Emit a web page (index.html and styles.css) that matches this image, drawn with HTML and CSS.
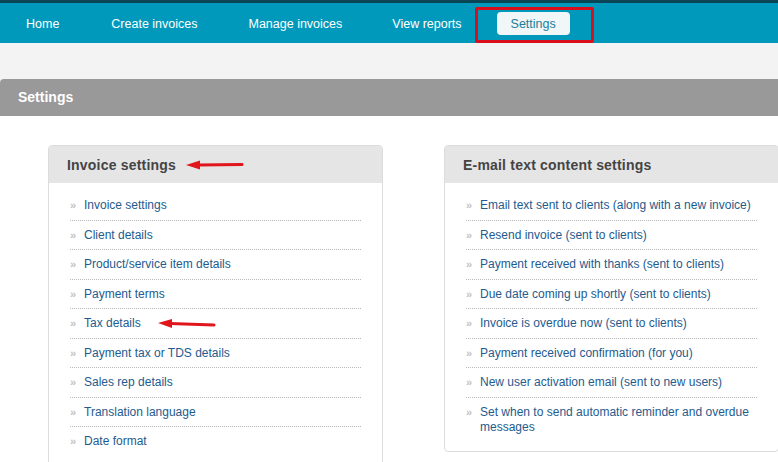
FILE: index.html
```html
<!DOCTYPE html>
<html lang="en">
  <head>
    <meta charset="UTF-8" />
    <title>Settings</title>
    <link rel="stylesheet" href="styles.css">
  </head>
  <body>
    <!-- Top navigation -->
    <div class="topbar">
      <a href="#" class="nav-item">Home</a>
      <a href="#" class="nav-item">Create invoices</a>
      <a href="#" class="nav-item">Manage invoices</a>
      <a href="#" class="nav-item">View reports</a>
      <div class="mark-box">
        <a href="#" class="nav-pill">Settings</a>
      </div>
    </div>

    <div class="page">
      <div class="titlebar">Settings</div>

      <div class="content">
        <div class="card">
          <div class="card-head">
            <h2>Invoice settings</h2>
            <svg class="arrow" width="58" height="10" viewBox="0 0 58 10">
              <polygon points="0,5 14,0.5 14,9.5" fill="#e0161c" />
              <line x1="12" y1="5" x2="56" y2="4.5" stroke="#e0161c" stroke-width="3" stroke-linecap="round" />
            </svg>
          </div>
          <ul class="links">
            <li><a href="#">Invoice settings</a></li>
            <li><a href="#">Client details</a></li>
            <li><a href="#">Product/service item details</a></li>
            <li><a href="#">Payment terms</a></li>
            <li>
              <a href="#">Tax details</a>
              <svg class="arrow arrow-small" width="58" height="10" viewBox="0 0 58 10">
                <polygon points="0,4 14,0 14,9" fill="#e0161c" />
                <line x1="12" y1="4.5" x2="56" y2="6" stroke="#e0161c" stroke-width="3" stroke-linecap="round" />
              </svg>
            </li>
            <li><a href="#">Payment tax or TDS details</a></li>
            <li><a href="#">Sales rep details</a></li>
            <li><a href="#">Translation language</a></li>
            <li><a href="#">Date format</a></li>
          </ul>
        </div>

        <div class="card">
          <div class="card-head">
            <h2>E-mail text content settings</h2>
          </div>
          <ul class="links">
            <li><a href="#">Email text sent to clients (along with a new invoice)</a></li>
            <li><a href="#">Resend invoice (sent to clients)</a></li>
            <li><a href="#">Payment received with thanks (sent to clients)</a></li>
            <li><a href="#">Due date coming up shortly (sent to clients)</a></li>
            <li><a href="#">Invoice is overdue now (sent to clients)</a></li>
            <li><a href="#">Payment received confirmation (for you)</a></li>
            <li><a href="#">New user activation email (sent to new users)</a></li>
            <li><a href="#">Set when to send automatic reminder and overdue messages</a></li>
          </ul>
        </div>
      </div>
    </div>
  </body>
</html>
```

FILE: styles.css
```css
/* Basic reset */
body,
html {
  margin: 0;
  padding: 0;
  font-family: "Liberation Sans", Arial, sans-serif;
  background: #ffffff;
}

/* Top navigation bar */
.topbar {
  display: flex;
  height: 40px;
  background-color: #0199bb;
  border-top: 3px solid #0b4656;
}

.nav-item {
  display: flex;
  align-items: center;
  padding: 1px 26px 0;
  color: #ffffff;
  font-size: 12.5px;
  text-decoration: none;
}

.nav-item:nth-child(3),
.nav-item:nth-child(4) {
  padding-left: 25px;
  padding-right: 25px;
}

/* red highlight around the current tab */
.mark-box {
  align-self: flex-end;
  box-sizing: border-box;
  height: 36px;
  margin-left: -12px;
  padding: 2px 21px 5px 19px;
  border: 3px solid #d9101c;
  border-radius: 2px;
}

.nav-pill {
  display: block;
  height: 23px;
  line-height: 24px;
  padding: 0 14px;
  background-color: #f1f6f8;
  border-radius: 4px;
  color: #1b7f9c;
  font-size: 12.5px;
  text-decoration: none;
}

/* Page area */
.page {
  background-color: #f3f3f3;
  padding-top: 36px;
}

.titlebar {
  height: 37px;
  line-height: 37px;
  padding-left: 18px;
  background-color: #999999;
  border-radius: 4px 0 0 0;
  color: #ffffff;
  font-size: 14px;
  font-weight: bold;
}

.content {
  display: flex;
  gap: 61px;
  padding: 29px 0 0 48px;
  background-color: #ffffff;
  align-items: flex-start;
}

.card {
  flex: 0 0 335px;
  box-sizing: border-box;
  border: 1px solid #dcdcdc;
  border-radius: 4px;
  background: #ffffff;
}

.card-head {
  display: flex;
  align-items: center;
  height: 37px;
  padding-left: 18px;
  background-color: #e6e5e6;
  border-radius: 3px 3px 0 0;
}

.card-head h2 {
  margin: 0;
  padding-top: 1px;
  font-size: 14px;
  color: #444444;
  letter-spacing: 0.2px;
}

.arrow {
  margin-left: 10px;
}

.arrow-small {
  margin-left: 14px;
  vertical-align: middle;
}

/* Link lists */
.links {
  list-style: none;
  margin: 0;
  padding: 8px 21px 10px 21px;
}

.links li {
  position: relative;
  padding: 7px 0 6.5px 14px;
  line-height: 15px;
  font-size: 12px;
  border-bottom: 1px dotted #b8b8b8;
}

.links li:last-child {
  border-bottom: none;
}

.links li::before {
  content: "»";
  position: absolute;
  left: 0;
  top: 7px;
  color: #c2c2c2;
  font-size: 11px;
  font-weight: bold;
}

.links a {
  color: #245b8e;
  text-decoration: none;
}
```
